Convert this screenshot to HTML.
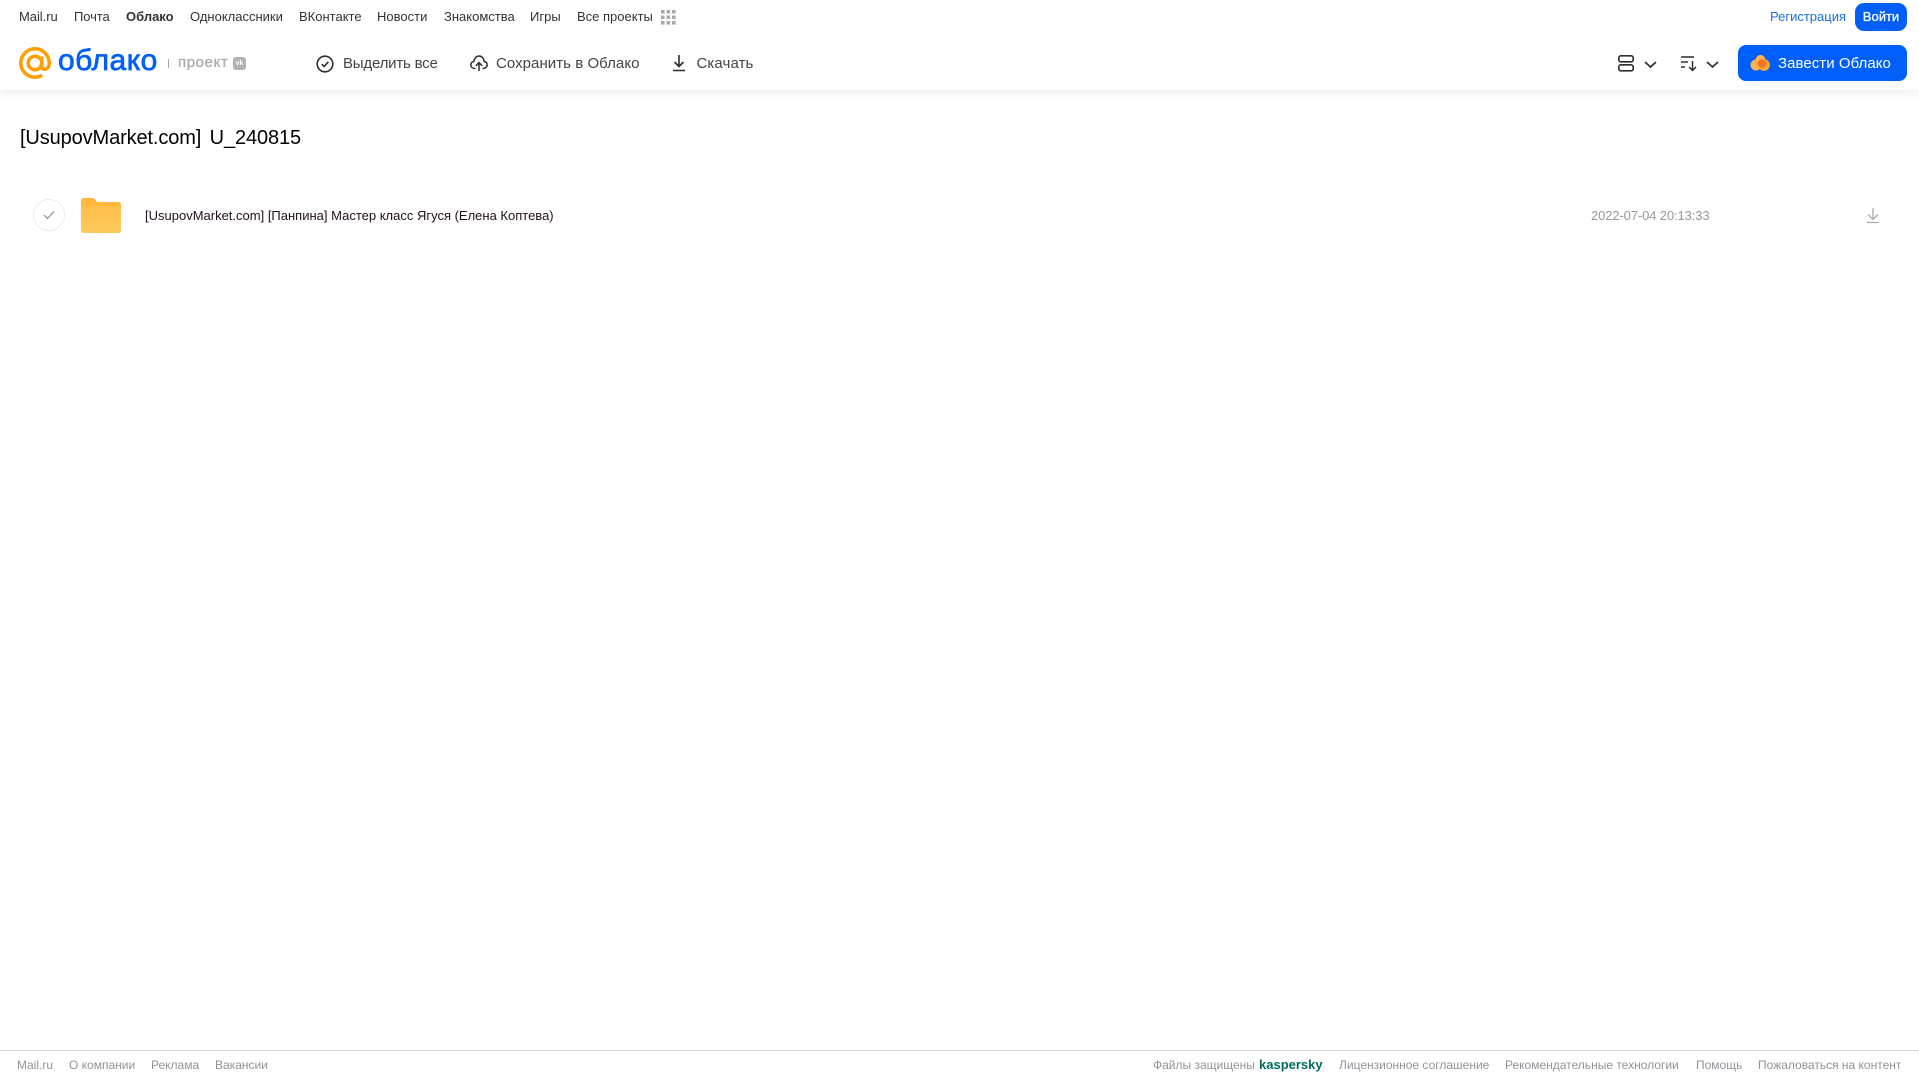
<!DOCTYPE html>
<html lang="ru"><head><meta charset="utf-8"><title>Облако</title>
<style>
html,body{margin:0;padding:0;background:#fff}
body{width:1919px;height:1079px;position:relative;overflow:hidden;font-family:"Liberation Sans",sans-serif;color:#2c2d2e}
.t{position:absolute;white-space:nowrap;line-height:16px}
.top{font-size:13px;top:9px;color:#333}
.nav{font-size:15px;top:55.500px;color:#444;letter-spacing:.1px}
.f{font-size:12px;top:1057px;color:#919399}
svg{position:absolute;overflow:visible}
</style></head><body>
<div style="position:absolute;left:0;top:0;width:1919px;height:90px;background:#fff;box-shadow:0 2px 10px rgba(0,0,0,.08)"></div>
<span class="t top" style="left:19px;letter-spacing:-.05px">Mail.ru</span>
<span class="t top" style="left:74px;letter-spacing:-.1px">Почта</span>
<span class="t top" style="left:126px;font-weight:bold">Облако</span>
<span class="t top" style="left:190px">Одноклассники</span>
<span class="t top" style="left:299px">ВКонтакте</span>
<span class="t top" style="left:377px">Новости</span>
<span class="t top" style="left:444px">Знакомства</span>
<span class="t top" style="left:530px">Игры</span>
<span class="t top" style="left:577px">Все проекты</span>
<svg style="left:661px;top:10px" width="15" height="15" fill="#aaa"><rect x="0" y="0" width="3.600" height="3.600"/><rect x="5.500" y="0" width="3.600" height="3.600"/><rect x="11" y="0" width="3.600" height="3.600"/><rect x="0" y="5.500" width="3.600" height="3.600"/><rect x="5.500" y="5.500" width="3.600" height="3.600"/><rect x="11" y="5.500" width="3.600" height="3.600"/><rect x="0" y="11" width="3.600" height="3.600"/><rect x="5.500" y="11" width="3.600" height="3.600"/><rect x="11" y="11" width="3.600" height="3.600"/></svg>
<span class="t top" style="left:1770px;color:#1a6fe0">Регистрация</span>
<div style="position:absolute;left:1855px;top:3px;width:52px;height:28px;border-radius:9px;background:#005ff9;color:#fff;font-size:13px;font-weight:normal;-webkit-text-stroke:.3px #fff;line-height:28px;text-align:center">Войти</div>

<svg style="left:19px;top:47px" width="32" height="32" viewBox="0 0 32 32" fill="none" stroke="#ff9e00" stroke-width="3.500"><circle cx="16" cy="16" r="6.800"/><path d="M22.800 9.500v9.500c0 4.800 7.400 4.800 7.400-3C30.200 8.200 23.800 1.800 16 1.800S1.800 8.200 1.800 16 8.200 30.200 16 30.200c2.800 0 5.200-.7 7.200-2"/></svg>
<span class="t" style="left:58px;top:44px;font-size:30px;line-height:34px;color:#005ff9;font-weight:normal;-webkit-text-stroke:.7px #005ff9;letter-spacing:.5px">облако</span>
<div style="position:absolute;left:168px;top:59px;width:1px;height:9px;background:#a5a7ad"></div>
<span class="t" style="left:178px;top:55px;font-size:15px;font-weight:normal;-webkit-text-stroke:.3px #a9abb0;color:#a9abb0;letter-spacing:.6px">проект</span>
<div style="position:absolute;left:233px;top:57px;width:13px;height:13px;border-radius:3px;background:#b0b2b6;color:#fff;font-size:7px;font-weight:bold;line-height:13px;text-align:center">vk</div>

<svg style="left:316px;top:54.500px" width="18" height="18" fill="none" stroke="#2c2d2e" stroke-width="1.600"><circle cx="9" cy="9" r="7.800"/><path d="M5.800 9.200l2.300 2.300 4.200-4.700"/></svg>
<span class="t nav" style="left:343px;letter-spacing:-.2px">Выделить все</span>
<svg style="left:470px;top:55px" width="18" height="17" fill="none" stroke="#2c2d2e" stroke-width="1.500"><path d="M5.500 13.500C1.500 13.500.5 11 .8 9.500 1 7.800 2.300 6.800 3.800 6.500 4.300 3.200 6.500 1 9 1c2.700 0 4.800 2.200 5.200 5.500 1.500.3 3 1.300 3 3.200 0 2-1.300 3.800-4.700 3.800"/><path d="M9 16V8M5.800 10.800L9 7.600l3.200 3.200"/></svg>
<span class="t nav" style="left:496px;letter-spacing:.05px">Сохранить в Облако</span>
<svg style="left:671px;top:54px" width="16" height="18" fill="none" stroke="#2c2d2e" stroke-width="1.600"><path d="M8 1v11.500M3.500 8l4.500 4.500L12.500 8M2 16.500h12"/></svg>
<span class="t nav" style="left:696.500px">Скачать</span>

<svg style="left:1618px;top:55px" width="16" height="17" fill="none" stroke="#2c2d2e" stroke-width="1.600"><rect x=".8" y=".8" width="14.400" height="6" rx="2"/><rect x=".8" y="9.800" width="14.400" height="6" rx="2"/></svg>
<svg style="left:1644px;top:60.500px" width="13" height="8" fill="none" stroke="#2c2d2e" stroke-width="1.700"><path d="M1 1l5.500 5L12 1"/></svg>
<svg style="left:1681px;top:55px" width="17" height="17" fill="none" stroke="#2c2d2e" stroke-width="1.500"><path d="M0 2h13M0 7h7M0 12h4M11.500 6v9.500M8 12l3.500 3.500L15 12"/></svg>
<svg style="left:1706px;top:60.500px" width="13" height="8" fill="none" stroke="#2c2d2e" stroke-width="1.700"><path d="M1 1l5.500 5L12 1"/></svg>

<div style="position:absolute;left:1738px;top:45px;width:169px;height:36px;border-radius:8px;background:#005ff9"></div>
<svg style="left:1751px;top:55px" width="19" height="16"><circle cx="9.500" cy="5" r="5" fill="#ffb24d"/><circle cx="5" cy="10" r="5.500" fill="#ffb24d"/><circle cx="13" cy="10" r="5.800" fill="#ffa930"/><circle cx="11" cy="8.500" r="4.300" fill="#f4742b"/></svg>
<span class="t" style="left:1778px;top:55.500px;font-size:15px;color:#fff;letter-spacing:.05px">Завести Облако</span>

<span class="t" style="left:20px;top:125px;font-size:20px;line-height:26px;color:#000;word-spacing:3px;letter-spacing:-.12px">[UsupovMarket.com] U_240815</span>

<div style="position:absolute;left:33px;top:199px;width:30px;height:30px;border:1px solid #e9eaec;border-radius:50%"></div>
<svg style="left:43px;top:210px" width="12" height="10" fill="none" stroke="#999" stroke-width="1.300"><path d="M1 5l3.500 3.500L11 1.500"/></svg>
<svg style="left:81px;top:198px" width="40" height="35"><defs><linearGradient id="g" x1="0" y1="0" x2="0" y2="1"><stop offset="0" stop-color="#ffbf4a"/><stop offset="1" stop-color="#ffc95f"/></linearGradient></defs><path d="M3 0h8c2 0 3 1 3.500 2L16 4h21c2 0 3 1 3 3v6H0V3c0-2 1-3 3-3z" fill="#ffb83b"/><path d="M0 8h40v24c0 2-1 3-3 3H3c-2 0-3-1-3-3z" fill="url(#g)"/></svg>
<span class="t" style="left:145px;top:207.500px;font-size:13px;color:#21101f">[UsupovMarket.com] [Панпина] Мастер класс Ягуся (Елена Коптева)</span>
<span class="t" style="left:1591px;top:207.500px;font-size:13px;color:#999;letter-spacing:-.12px">2022-07-04 20:13:33</span>
<svg style="left:1866px;top:207px" width="14" height="17" fill="none" stroke="#aaa" stroke-width="1.300"><path d="M7 1v11M2 7.500l5 5 5-5M1 15.500h12"/></svg>

<div style="position:absolute;left:0;top:1050px;width:1919px;height:1px;background:#d8d8d8"></div>
<span class="t f" style="left:17px">Mail.ru</span>
<span class="t f" style="left:69px">О компании</span>
<span class="t f" style="left:151px">Реклама</span>
<span class="t f" style="left:215px">Вакансии</span>
<span class="t f" style="left:1153px">Файлы защищены</span>
<span class="t" style="left:1259px;top:1057px;font-size:13px;font-weight:bold;color:#006d5c">kaspersky</span>
<span class="t f" style="left:1339px">Лицензионное соглашение</span>
<span class="t f" style="left:1505px">Рекомендательные технологии</span>
<span class="t f" style="left:1696px">Помощь</span>
<span class="t f" style="left:1758px">Пожаловаться на контент</span>
</body></html>
